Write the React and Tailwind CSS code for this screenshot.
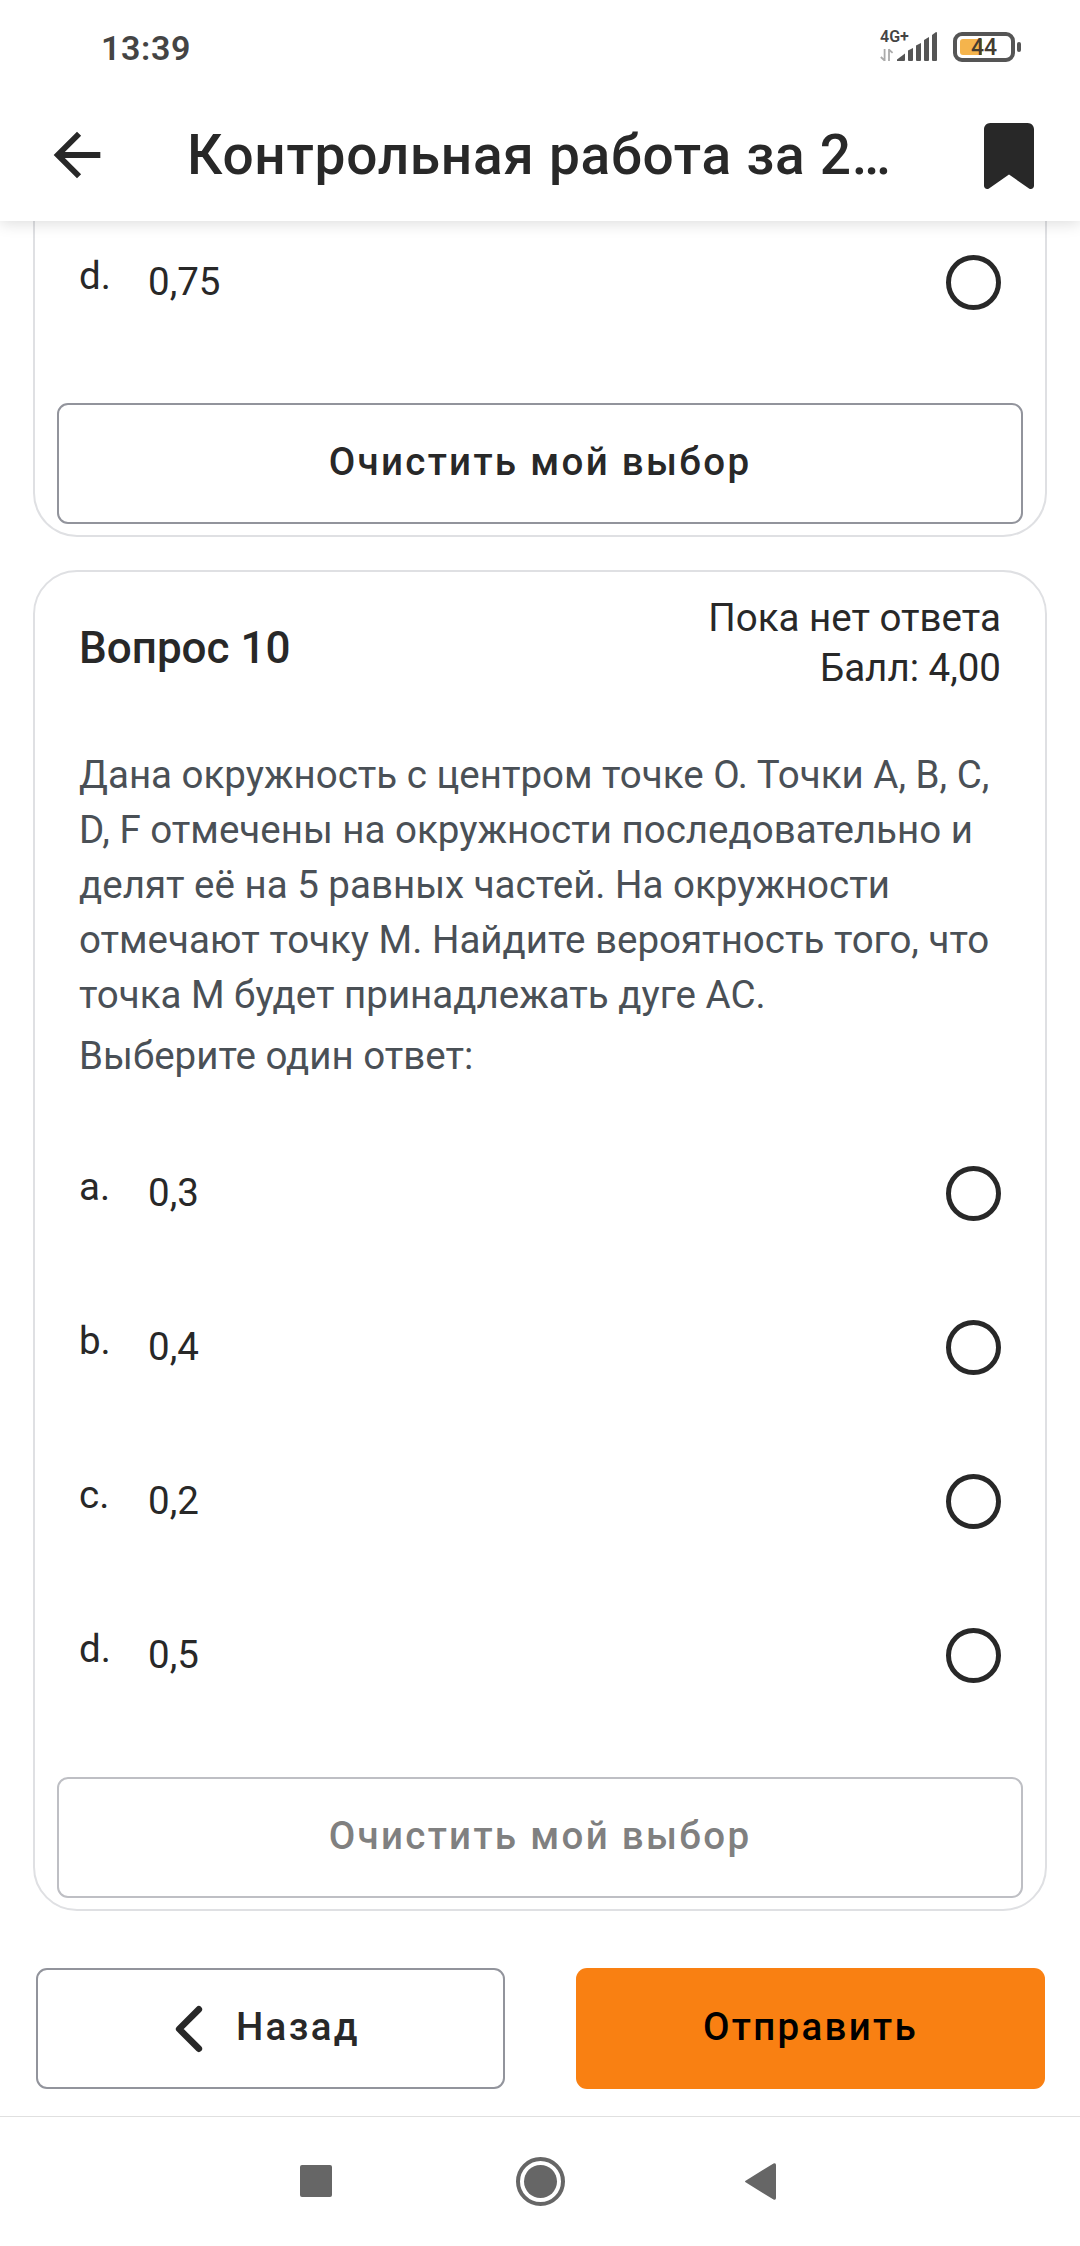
import React from "react";

const firstAnswers = [{ letter: "d.", value: "0,75" }];

const secondAnswers = [
    { letter: "a.", value: "0,3" },
    { letter: "b.", value: "0,4" },
    { letter: "c.", value: "0,2" },
    { letter: "d.", value: "0,5" },
];

const StatusBar = () => {
    return (
        <div className="h-[88px] pl-[101px] pr-[59px] pt-[31px] flex justify-between items-start">
            <span className="h-8 leading-[34px] text-[34px] font-semibold tracking-[0.6px] text-[#444444]">13:39</span>
            <div className="flex items-start">
                <div className="relative w-[58px] h-[31px] mr-[15px]">
                    <span className="absolute left-0 -top-[2px] text-[16px] leading-4 font-semibold text-[#444444]">4G+</span>
                    <svg className="block" width="58" height="31" viewBox="0 0 58 31">
                        <path d="M4.6 18v12M4.6 29.5L0.8 26M9 30V18M8.8 18.5l3.8 3.4" stroke="#ababab" strokeWidth="1.8" fill="none" />
                        <g fill="#555555">
                            <path d="M17 30v-1.500L25 22.500V29a1 1 0 0 1-1 1z" />
                            <path d="M28 19.500l5-2.500V29a1 1 0 0 1-1 1h-3a1 1 0 0 1-1-1z" />
                            <path d="M36 14.500l5-2.500V29a1 1 0 0 1-1 1h-3a1 1 0 0 1-1-1z" />
                            <path d="M44 9l5-3V29a1 1 0 0 1-1 1h-3a1 1 0 0 1-1-1z" />
                            <path d="M52 4l4-3q1 0 1 1V29a1 1 0 0 1-1 1h-3a1 1 0 0 1-1-1z" />
                        </g>
                    </svg>
                </div>
                <div className="flex items-center mt-px">
                    <div className="relative w-[62px] h-[30px] border-4 border-[#555555] rounded-[9px]">
                        <div className="absolute left-[3px] top-[3px] w-[22px] h-4 rounded-l-[3px] bg-[#f5b44c]" />
                        <span className="absolute left-[14px] top-0 leading-[23px] text-[23px] font-medium text-[#443c30]">44</span>
                    </div>
                    <div className="w-1 h-[10px] ml-[2px] rounded-[2px] bg-[#555555]" />
                </div>
            </div>
        </div>
    );
};

const Header = () => {
    return (
        <div className="relative z-10 h-[221px] shrink-0 bg-white shadow-[0_3px_14px_rgba(0,0,0,0.13)]">
            <StatusBar />
            <div className="h-[133px] pl-[42px] pr-[46px] flex items-center">
                <svg className="shrink-0" width="70" height="70" viewBox="0 0 24 24" fill="#282828">
                    <path d="M20 11H7.830l5.590-5.590L12 4l-8 8 8 8 1.410-1.410L7.830 13H20v-2z" />
                </svg>
                <div className="ml-[75px] w-[740px] text-[55px] leading-[64px] font-medium tracking-[0.0130em] text-[#282828] whitespace-nowrap">
                    Контрольная работа за 2…
                </div>
                <svg className="ml-auto mt-[3px] shrink-0" width="50" height="66" viewBox="0 0 384 512" preserveAspectRatio="none" fill="#282828">
                    <path d="M0 48v439.700C0 501.100 10.900 512 24.300 512c5 0 9.900-1.500 14-4.400L192 400l153.700 107.600c4.100 2.900 9 4.400 14 4.400 13.400 0 24.300-10.900 24.300-24.300V48c0-26.500-21.500-48-48-48H48C21.500 0 0 21.500 0 48z" />
                </svg>
            </div>
        </div>
    );
};

const Answer = ({ letter, value }) => {
    return (
        <div className="h-[154px] shrink-0 px-[44px] flex items-center text-[38.500px] text-[#282828]">
            <span className="w-[69px] pb-[12px] leading-[50px]">{letter}</span>
            <span className="leading-[50px] pb-px">{value}</span>
            <span className="ml-auto w-[55px] h-[55px] rounded-full border-5 border-[#282828]" />
        </div>
    );
};

const ClearButton = ({ disabled }) => {
    return (
        <button
            disabled={disabled}
            className="mx-[22px] h-[121px] shrink-0 rounded-[11px] border-2 border-[#92949c] disabled:border-[#bebfc4] text-[38.500px] font-medium tracking-[0.06em] text-[#282828] disabled:text-[#808080]"
        >
            <span className="block pb-[3px]">Очистить мой выбор</span>
        </button>
    );
};

const NavBar = () => {
    return (
        <div className="h-[130px] shrink-0 border-t border-[#e0e0e0] pl-[300px] pb-px flex items-center">
            <div className="w-8 h-8 rounded-[2px] bg-[#666666]" />
            <div className="ml-[184px] w-[49px] h-[49px] rounded-full border-4 border-[#666666] flex justify-center items-center">
                <div className="w-[33px] h-[33px] rounded-full bg-[#666666]" />
            </div>
            <svg className="ml-[180px]" width="31" height="37" viewBox="0 0 31 37" fill="#666666">
                <path d="M1 17.500L28.500 0.500Q31 -0.500 31 2V35q0 2.500-2.500 1.500L1 19.500q-2-1 0-2z" />
            </svg>
        </div>
    );
};

const App = () => {
    return (
        <div className="w-[1080px] h-[2246px] overflow-hidden flex flex-col bg-white font-[Roboto,sans-serif]">
            <Header />

            <div className="h-[1895px] shrink-0 flex flex-col">
                <div className="mx-[33px] h-[316px] shrink-0 flex flex-col justify-end border-2 border-t-0 border-[#dfe0e3] rounded-b-[44px] pb-[11px]">
                    {firstAnswers.map((answer) => (
                        <Answer key={answer.letter} {...answer} />
                    ))}
                    <div className="h-11 shrink-0" />
                    <ClearButton />
                </div>

                <div className="mx-[33px] mt-[33px] h-[1341px] shrink-0 flex flex-col border-2 border-[#dfe0e3] rounded-[44px]">
                    <div className="h-[151px] px-[44px] flex justify-between items-center">
                        <h2 className="text-[44px] font-medium text-[#282828]">Вопрос 10</h2>
                        <div className="text-right text-[38.500px] leading-[50px] text-[#282828] pb-[9px]">
                            <div>Пока нет ответа</div>
                            <div>Балл: 4,00</div>
                        </div>
                    </div>

                    <div className="mt-[24px] px-[44px] text-[38.500px] leading-[55px] text-[#4a5056] whitespace-nowrap">
                        <p>
                            Дана окружность с центром точке О. Точки А, В, С,
                            <br />
                            D, F отмечены на окружности последовательно и
                            <br />
                            делят её на 5 равных частей. На окружности
                            <br />
                            отмечают точку М. Найдите вероятность того, что
                            <br />
                            точка М будет принадлежать дуге АС.
                        </p>
                        <p className="mt-[6px]">Выберите один ответ:</p>
                    </div>

                    <div className="mt-[33px] mb-[45px]">
                        {secondAnswers.map((answer) => (
                            <Answer key={answer.letter} {...answer} />
                        ))}
                    </div>

                    <ClearButton disabled />
                </div>

                <div className="mt-[57px] pl-[36px] pr-[35px] flex justify-between">
                    <button className="w-[469px] h-[121px] rounded-[11px] border-2 border-[#92949c] pl-[116px] flex items-center text-[38.500px] font-medium tracking-[0.06em] text-[#282828]">
                        <svg width="70" height="70" viewBox="0 0 512 512" fill="none" stroke="#282828" strokeWidth="48" strokeLinecap="round" strokeLinejoin="round">
                            <path d="M328 112L184 256l144 144" />
                        </svg>
                        <span className="ml-[12px] pb-[3px]">Назад</span>
                    </button>
                    <button className="w-[469px] h-[121px] rounded-[11px] bg-[#f98012] pb-[3px] text-[38.500px] font-medium tracking-[0.06em] text-black">
                        Отправить
                    </button>
                </div>
            </div>

            <NavBar />
        </div>
    );
};

export default App;
